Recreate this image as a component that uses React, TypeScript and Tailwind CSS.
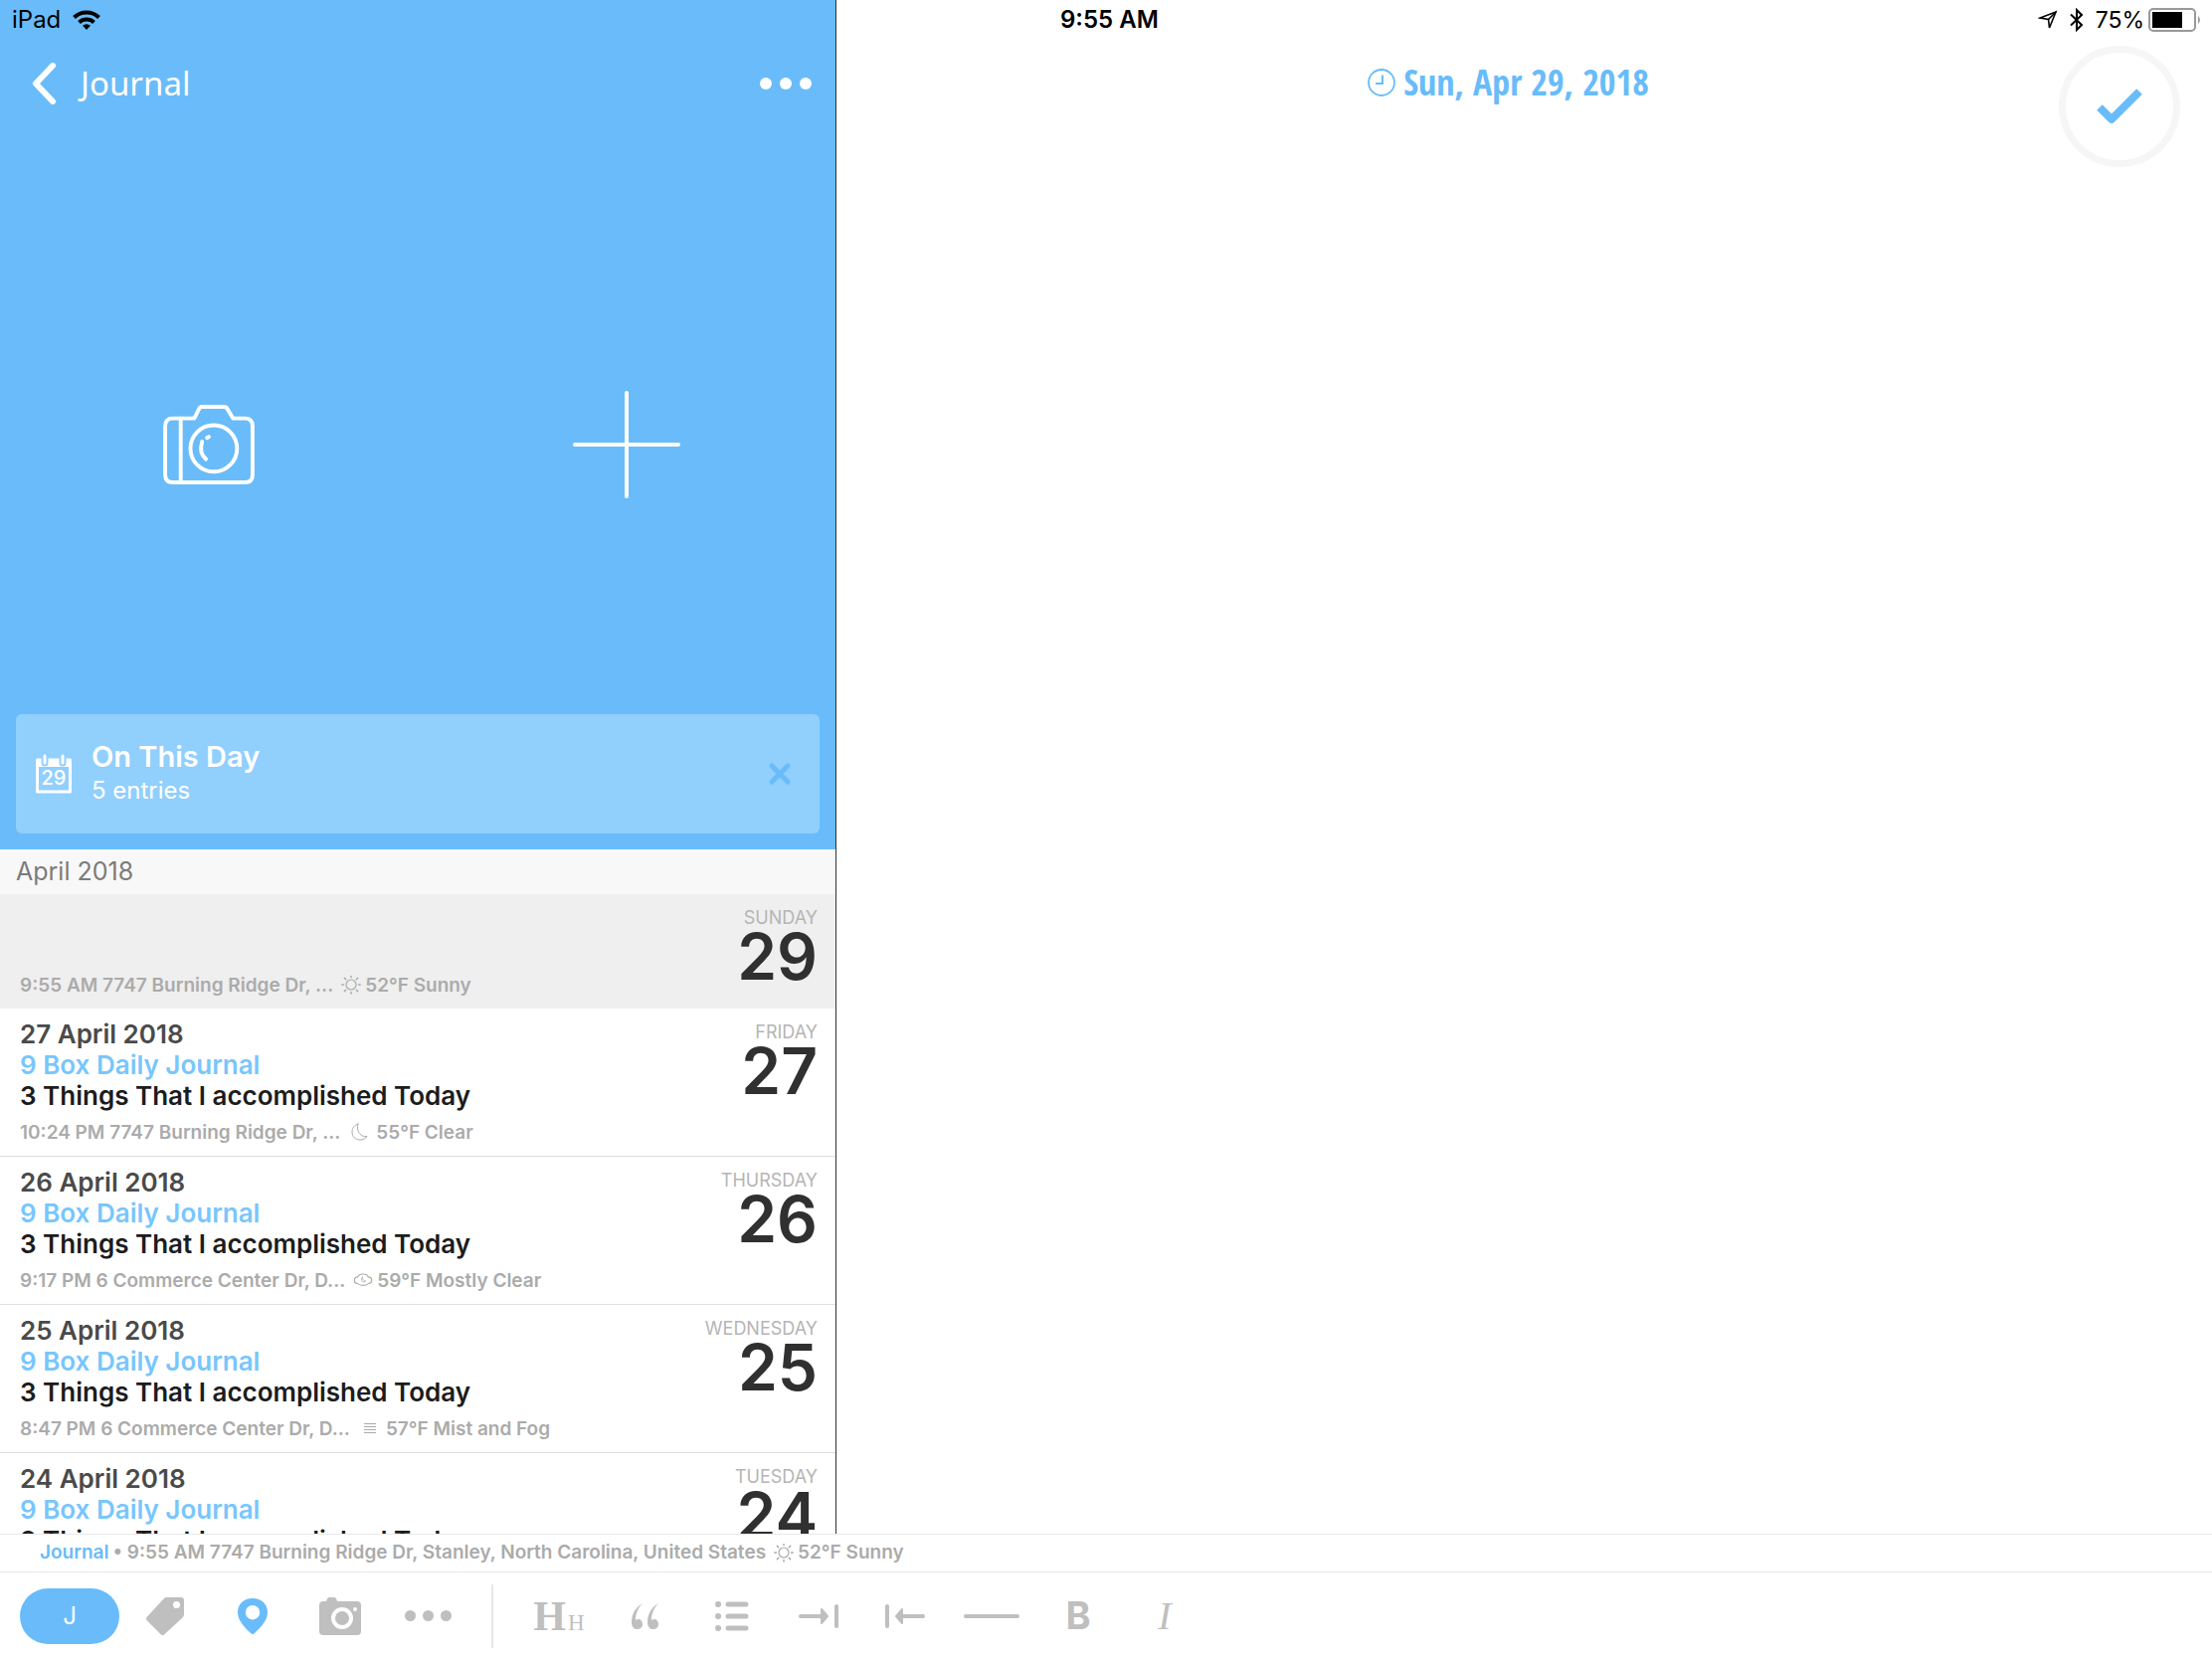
import React, { useState } from "react";

type Weather = "sun" | "moon" | "cloud" | "fog";

interface Entry {
  day: string;
  date: string;
  title?: string;
  meta: string;
  weather: Weather;
  forecast: string;
}

const entries: Entry[] = [
  { day: "Sunday", date: "29", meta: "9:55 AM 7747 Burning Ridge Dr, ...", weather: "sun", forecast: "52°F Sunny" },
  { day: "Friday", date: "27", title: "27 April 2018", meta: "10:24 PM 7747 Burning Ridge Dr, ...", weather: "moon", forecast: "55°F Clear" },
  { day: "Thursday", date: "26", title: "26 April 2018", meta: "9:17 PM 6 Commerce Center Dr, D...", weather: "cloud", forecast: "59°F Mostly Clear" },
  { day: "Wednesday", date: "25", title: "25 April 2018", meta: "8:47 PM 6 Commerce Center Dr, D...", weather: "fog", forecast: "57°F Mist and Fog" },
  { day: "Tuesday", date: "24", title: "24 April 2018", meta: "9:02 PM 6 Commerce Center Dr, D...", weather: "sun", forecast: "61°F Sunny" },
];

const WeatherIcon = ({ kind }: { kind: Weather }) => (
  <svg
    viewBox="0 0 20 20"
    className={`h-5 shrink-0 ${kind === "moon" || kind === "fog" ? "w-6" : "w-5"}`}
    fill="none"
    stroke="currentColor"
    strokeWidth="1.2"
    strokeLinecap="round"
  >
    {kind === "sun" && (
      <>
        <circle cx="10" cy="9" r="5" />
        <path d="M10 0v1.500M10 16.500v1.500M.7 9h1.800M17.500 9h1.800M3.400 2.400l1.300 1.300M15.300 14.300l1.300 1.300M3.400 15.600l1.300-1.300M15.300 3.700l1.300-1.300" strokeWidth="1.500" />
      </>
    )}
    {kind === "moon" && (
      <path d="M8 1C4 2.500 2 5.500 2 9c0 5 3.500 8 8 8 3 0 5.500-1 7-3.500C11 15 5.500 8 8 1z" strokeWidth="1" strokeLinejoin="round" />
    )}
    {kind === "cloud" && (
      <>
        <path d="M4.500 12.500a3.300 3.300 0 0 1 .3-6.600C6 2 14 2 15.200 5.900a3.300 3.300 0 0 1 .3 6.600c-2 2.500-9 2.500-11 0z" />
        <path d="M9.500 6c-1.500 1-2 4 .5 4.800 1.200.4 2.300 0 2.800-1-2 .4-4-1.300-3.300-3.800z" strokeWidth=".8" />
      </>
    )}
    {kind === "fog" && <path d="M4 4.500h12M4 7.500h12M4 10.500h12M4 13.500h12" strokeLinecap="butt" />}
  </svg>
);

const Clock = () => (
  <svg viewBox="0 0 28 28" className="h-7 w-7" fill="none" stroke="currentColor" strokeWidth="1.800">
    <circle cx="14" cy="14" r="13" />
    <path d="M15 6.500v8.500H8" strokeWidth="2" />
  </svg>
);

const toolButton = "flex h-12 w-14 items-center justify-center";

export default function App() {
  const [selected, setSelected] = useState("29");
  const [showOnThisDay, setShowOnThisDay] = useState(true);

  return (
    <div className="flex h-screen flex-col overflow-hidden bg-white font-['Inter','Liberation_Sans',sans-serif]">
      <div className="flex min-h-0 flex-1">
        <aside className="flex w-[841px] shrink-0 flex-col overflow-hidden border-r border-[#333]">
          <div className="flex h-[854px] shrink-0 flex-col bg-[#69bcf9]">
            <div className="flex h-10 items-center gap-3 px-3 text-black">
              <span className="text-[24px]">iPad</span>
              <svg viewBox="0 0 28 20" className="h-5 w-7" fill="none" stroke="currentColor" strokeWidth="4">
                <path d="M1.500 7.500a18 18 0 0 1 25 0" />
                <path d="M6.500 12.500a11 11 0 0 1 15 0" />
                <path d="M14 20l-4-4.300a6 6 0 0 1 8 0z" fill="currentColor" stroke="none" />
              </svg>
            </div>
            <header className="flex h-[88px] items-center justify-between px-6 text-white">
              <button className="flex items-center gap-6 px-2">
                <svg viewBox="0 0 25 42" className="h-[42px] w-[25px]" fill="none" stroke="currentColor" strokeWidth="6" strokeLinecap="round" strokeLinejoin="round">
                  <path d="M21 3L4 21l17 18" />
                </svg>
                <span className="font-['Noto_Sans','Inter',sans-serif] text-[33px]">Journal</span>
              </button>
              <button aria-label="More" className="flex gap-2">
                <span className="h-3 w-3 rounded-full bg-white" />
                <span className="h-3 w-3 rounded-full bg-white" />
                <span className="h-3 w-3 rounded-full bg-white" />
              </button>
            </header>
            <div className="grid flex-1 grid-cols-2 pt-12">
              <button aria-label="New photo entry" className="flex items-center justify-center text-white">
                <svg viewBox="0 0 94 82" className="h-20 w-[92px]" fill="none" stroke="currentColor" strokeWidth="4" strokeLinecap="round" strokeLinejoin="round">
                  <path d="M10 14h22l5-10q1-2 3-2h22q3 0 4 2l6 10h12q8 0 8 8v50q0 8-8 8H10q-8 0-8-8V22q0-8 8-8z" />
                  <path d="M18 14v66" />
                  <circle cx="52" cy="45" r="24" />
                  <path d="M44 56c-5-4-6-11-4-18M45 34l2-1" />
                </svg>
              </button>
              <button aria-label="New entry" className="flex items-center justify-center text-white">
                <svg viewBox="0 0 108 108" className="h-[108px] w-[108px]" stroke="currentColor" strokeWidth="4" strokeLinecap="round">
                  <path d="M54 2v104M2 54h104" />
                </svg>
              </button>
            </div>
            {showOnThisDay && (
              <section className="mx-4 mb-4 flex h-[120px] items-center rounded-md bg-[#91cffd] pr-7 pl-5 text-white">
                <div className="relative flex h-10 w-9 items-end justify-center">
                  <svg viewBox="0 0 36 40" className="absolute inset-0" fill="none">
                    <path d="M1.500 6v32h33V6z" stroke="currentColor" strokeWidth="3" strokeLinejoin="round" />
                    <path d="M1 5h34v8H1z" fill="currentColor" />
                    <path d="M9 1v8M27 1v8" stroke="#91cffd" strokeWidth="7" strokeLinecap="round" />
                    <path d="M9 2v7M27 2v7" stroke="currentColor" strokeWidth="3" strokeLinecap="round" />
                  </svg>
                  <span className="relative pb-1 text-[20px] leading-6 font-medium">29</span>
                </div>
                <div className="ml-5 flex-1 pb-[2px]">
                  <h2 className="text-[29px] leading-9 font-semibold">On This Day</h2>
                  <p className="text-[24px] leading-8">5 entries</p>
                </div>
                <button aria-label="Dismiss" onClick={() => setShowOnThisDay(false)} className="text-[#69bcf9]">
                  <svg viewBox="0 0 24 24" className="h-6 w-6" stroke="currentColor" strokeWidth="5" strokeLinecap="round">
                    <path d="M4 4l16 16M20 4L4 20" />
                  </svg>
                </button>
              </section>
            )}
          </div>

          <h3 className="flex h-[45px] shrink-0 items-center bg-[#f8f8f8] px-4 text-[25px] text-[#7b7b7b]">April 2018</h3>

          <ul className="min-h-0 flex-1 overflow-hidden">
            {entries.map((entry) => (
              <li key={entry.date}>
                <button
                  onClick={() => setSelected(entry.date)}
                  className={`flex w-full justify-between pr-[18px] pl-5 text-left ${
                    entry.title ? "h-[149px] border-b border-[#dedede]" : "h-[115px]"
                  } ${selected === entry.date ? "bg-[#efefef]" : "bg-white"}`}
                >
                  <div className="flex h-full flex-col justify-between pt-[10px] pb-[11px]">
                    <div className="text-[26px] leading-[31px] font-semibold">
                      {entry.title && (
                        <>
                          <p className="text-[#4a4a4a]">{entry.title}</p>
                          <p className="text-[#78c6fc]">9 Box Daily Journal</p>
                          <p className="text-[#1c1c1c]">3 Things That I accomplished Today</p>
                        </>
                      )}
                    </div>
                    <p className="flex items-center gap-1 text-[19px] leading-6 font-semibold text-[#ababab]">
                      <span className="mr-1">{entry.meta}</span>
                      <WeatherIcon kind={entry.weather} />
                      <span>{entry.forecast}</span>
                    </p>
                  </div>
                  <div className="flex flex-col items-end pt-3">
                    <span className="text-[18px] leading-6 text-[#b5b5b5] uppercase">{entry.day}</span>
                    <span className="text-[64px] leading-[54px] font-semibold text-[#303030]">{entry.date}</span>
                  </div>
                </button>
              </li>
            ))}
          </ul>
        </aside>

        <main className="flex min-w-0 flex-1 flex-col">
          <div className="flex h-10 items-center justify-between pr-[10px] text-black">
            <span className="ml-[225px] text-[24px] font-semibold">9:55 AM</span>
            <div className="flex items-center gap-3 text-[23px]">
              <svg viewBox="0 0 20 20" className="h-5 w-5" fill="none" stroke="currentColor" strokeWidth="1.600" strokeLinejoin="miter">
                <path d="M18 2L2 8l8.500 1.500L11.500 18z" />
                <path d="M18 2l-7.500 7.500" />
              </svg>
              <svg viewBox="0 0 14 24" className="h-6 w-[14px]" fill="none" stroke="currentColor" strokeWidth="2">
                <path d="M1 6.500l11 10.500-5 5V2l5 5L1 17.500" />
              </svg>
              <span>75%</span>
              <svg viewBox="0 0 54 24" className="-ml-2 h-6 w-[54px]">
                <rect x="1" y="1" width="46" height="22" rx="4" fill="none" stroke="#999" strokeWidth="2" />
                <rect x="4" y="4" width="30" height="16" fill="#000" />
                <path d="M50 8q4 4 0 8z" fill="#999" />
              </svg>
            </div>
          </div>
          <div className="grid grid-cols-[1fr_auto_1fr] items-start pr-8">
            <button className="col-start-2 flex h-[86px] items-center gap-2 font-['Open_Sans_Condensed','Roboto_Condensed','Roboto',sans-serif] text-[36px] font-semibold text-[#69bcf9]">
              <Clock />
              <span>Sun, Apr 29, 2018</span>
            </button>
            <button aria-label="Done" className="mt-[6px] flex h-[122px] w-[122px] items-center justify-center justify-self-end rounded-full border-[7px] border-[#f6f6f6] text-[#69bcf9]">
              <svg viewBox="0 0 48 40" className="h-10 w-12" fill="none" stroke="currentColor" strokeWidth="8" strokeLinejoin="round">
                <path d="M4 21l12 12L44 5" />
              </svg>
            </button>
          </div>
          <textarea aria-label="Entry text" className="w-full flex-1 resize-none p-6 text-[26px] outline-none" />
        </main>
      </div>

      <footer className="shrink-0">
        <p className="flex h-[38px] items-center gap-1 border-t border-[#e8e8e8] px-10 text-[19px] font-semibold text-[#ababab]">
          <a href="#journal" className="text-[#69bcf9]">Journal</a>
          <span className="mr-1">• 9:55 AM 7747 Burning Ridge Dr, Stanley, North Carolina, United States</span>
          <WeatherIcon kind="sun" />
          <span>52°F Sunny</span>
        </p>
        <div className="flex h-[88px] items-center border-t border-[#e8e8e8] pl-5 text-[#bfbfbf]">
          <button className="h-14 w-[100px] rounded-full bg-[#69bcf9] text-[24px] text-white">J</button>
          <div className="ml-[18px] flex gap-8">
            <button aria-label="Tags" className={toolButton}>
              <svg viewBox="0 0 38 38" className="h-[38px] w-[38px]" fill="currentColor" fillRule="evenodd">
                <path d="M20 0h15q3 0 3 3v14q0 2-1.500 3.500L18 37.500q-1.500 1-3 0L.5 23q-1-1.500 0-3L18 1q1-1 2-1zM30.500 4a3.500 3.500 0 1 0 0 7 3.500 3.500 0 1 0 0-7z" />
              </svg>
            </button>
            <button aria-label="Location" className={`${toolButton} text-[#69bcf9]`}>
              <svg viewBox="0 0 30 36" className="h-9 w-[30px]" fill="currentColor" fillRule="evenodd">
                <path d="M15 0C6 0 0 6 0 14c0 9 8 16 13 21q2 2 4 0c5-5 13-12 13-21C30 6 24 0 15 0zM15 7a7.200 7.200 0 1 1 0 14.400A7.200 7.200 0 1 1 15 7z" />
              </svg>
            </button>
            <button aria-label="Photos" className={toolButton}>
              <svg viewBox="0 0 42 38" className="h-[38px] w-[42px]">
                <path d="M4 4h3q1-4 3-4h5q2 0 3 4h20q4 0 4 4v26q0 4-4 4H4q-4 0-4-4V8q0-4 4-4z" fill="currentColor" />
                <circle cx="23" cy="21" r="9" fill="currentColor" stroke="#fff" strokeWidth="4" />
                <circle cx="36" cy="12" r="2" fill="#fff" />
              </svg>
            </button>
            <button aria-label="More options" className={`${toolButton} gap-[7px]`}>
              <span className="h-[11px] w-[11px] shrink-0 rounded-full bg-current" />
              <span className="h-[11px] w-[11px] shrink-0 rounded-full bg-current" />
              <span className="h-[11px] w-[11px] shrink-0 rounded-full bg-current" />
            </button>
          </div>
          <div className="ml-9 h-16 w-[2px] bg-[#e8e8e8]" />
          <div className="ml-[38px] flex gap-[31px]">
            <button aria-label="Heading" className={`${toolButton} font-['Liberation_Serif',serif]`}>
              <span className="flex items-baseline gap-[2px]">
                <span className="text-[42px] leading-[48px] font-bold">H</span>
                <span className="text-[23px] leading-6">H</span>
              </span>
            </button>
            <button aria-label="Quote" className={toolButton}>
              <svg viewBox="0 0 28 28" className="h-7 w-7" fill="currentColor">
                <path d="M11 1C4 5 0 12 0 20c0 4 2 7 5 7 4 0 6-2 6-5s-2-5-4-5q-2 0-3 1C4 12 6 6 11 1z" />
                <path d="M27 1c-7 4-11 11-11 19 0 4 2 7 5 7 4 0 6-2 6-5s-2-5-4-5q-2 0-3 1c0-6 2-12 7-17z" />
              </svg>
            </button>
            <button aria-label="List" className={toolButton}>
              <svg viewBox="0 0 34 30" className="h-[30px] w-[34px]" stroke="currentColor" strokeWidth="5" strokeLinecap="round">
                <path d="M3 3h.1M3 15h.1M3 27h.1" strokeWidth="6" />
                <path d="M13 3h18M13 15h18M13 27h18" />
              </svg>
            </button>
            <button aria-label="Indent" className={toolButton}>
              <svg viewBox="0 0 40 24" className="h-6 w-10" fill="currentColor" stroke="currentColor" strokeLinecap="round" strokeLinejoin="round">
                <path d="M2 12h20" strokeWidth="4" />
                <path d="M23 5v14l6-7z" strokeWidth="2" />
                <path d="M38 2v20" strokeWidth="4" />
              </svg>
            </button>
            <button aria-label="Outdent" className={toolButton}>
              <svg viewBox="0 0 40 24" className="h-6 w-10" fill="currentColor" stroke="currentColor" strokeLinecap="round" strokeLinejoin="round">
                <path d="M38 12H18" strokeWidth="4" />
                <path d="M17 5v14l-6-7z" strokeWidth="2" />
                <path d="M2 2v20" strokeWidth="4" />
              </svg>
            </button>
            <button aria-label="Divider" className={toolButton}>
              <span className="h-1 w-14 rounded-full bg-current" />
            </button>
            <button aria-label="Bold" className={`${toolButton} text-[38px] font-bold`}>B</button>
            <button aria-label="Italic" className={`${toolButton} font-['Liberation_Serif',serif] text-[40px] italic`}>I</button>
          </div>
        </div>
      </footer>
    </div>
  );
}
